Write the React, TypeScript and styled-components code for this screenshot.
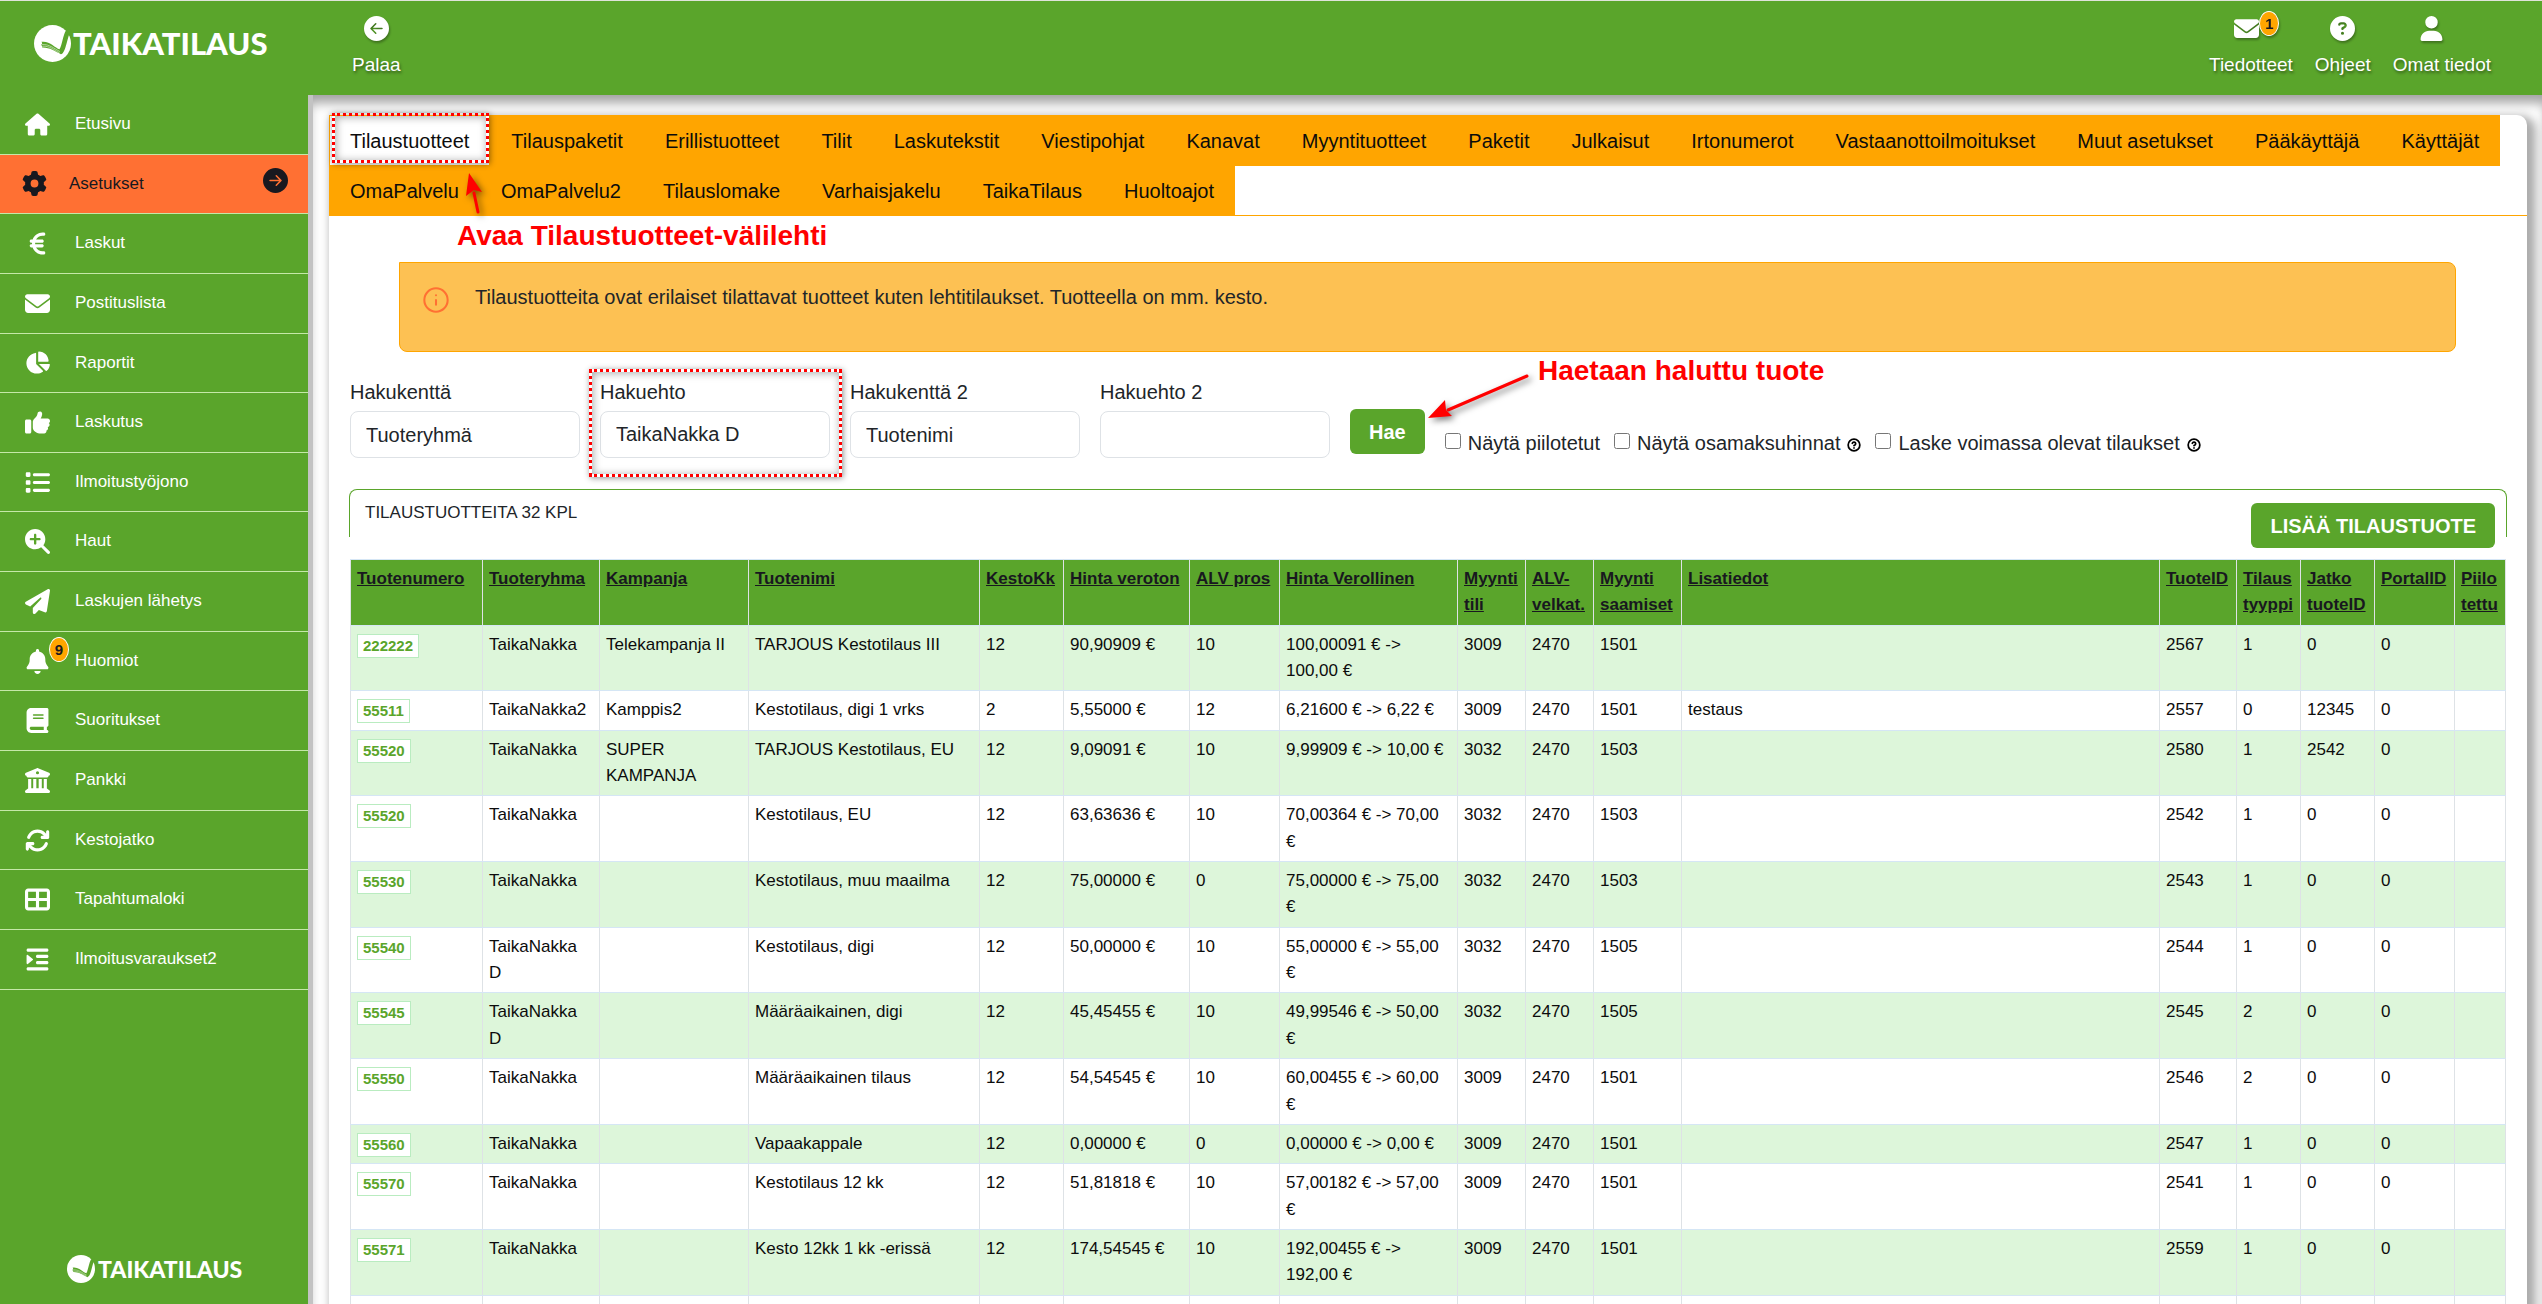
import React from 'react';
import styled, { createGlobalStyle } from 'styled-components';
import {
  FaHouse, FaGear, FaEuroSign, FaEnvelope, FaChartPie, FaThumbsUp, FaList,
  FaMagnifyingGlassPlus, FaPaperPlane, FaBell, FaBook, FaBuildingColumns,
  FaArrowsRotate, FaTableCellsLarge, FaIndent, FaUser, FaCircleQuestion,
} from 'react-icons/fa6';
import { BsArrowLeftCircleFill, BsArrowRightCircleFill } from 'react-icons/bs';
import { CircleQuestionMark, Info } from 'lucide-react';

const green = '#5aa52b';
const orange = '#ffa500';
const dark = '#18181f';
const ink = '#212529';

const GlobalStyle = createGlobalStyle`
  *, *::before, *::after { box-sizing: border-box; }
  body { margin: 0; background: #fff; overflow: hidden; }
  body, button, input, select {
    font-family: "Liberation Sans", Arial, Helvetica, sans-serif;
    font-size: 20px;
    line-height: 30px;
    color: ${ink};
  }
  a { color: inherit; text-decoration: none; }
  ul { list-style: none; margin: 0; padding: 0; }
`;

const Page = styled.div`
  display: flex;
  flex-direction: column;
  height: 100vh;
`;

/* Header */
const Header = styled.header`
  position: relative;
  z-index: 2;
  display: flex;
  flex: none;
  height: 95px;
  padding-right: 51px;
  background: ${green};
  border-top: 1px solid #dfe3da;
`;

const LogoSlot = styled.div`
  width: 308px;
  padding: 23px 0 0 34px;
`;

const TopBar = styled.div`
  position: relative;
  display: flex;
  flex: 1;
  gap: 22px;
  padding: 15px 0 0 44px;
`;

const TopLink = styled.a<{ $push?: boolean }>`
  display: flex;
  flex-direction: column;
  align-items: center;
  gap: 10px;
  margin-left: ${(p) => (p.$push ? 'auto' : '0')};
  color: #fff;
  font-size: 19px;
  line-height: 28px;
  text-shadow: 1px 2px 3px rgba(0, 0, 0, 0.45);
`;

const TopIcon = styled.span<{ $trail?: number }>`
  position: relative;
  display: flex;
  height: 25px;
  margin-right: ${(p) => p.$trail || 0}px;
  filter: drop-shadow(1px 2px 1px rgba(0, 0, 0, 0.3));
`;

const Badge = styled.span<{ $raised?: boolean }>`
  position: absolute;
  left: ${(p) => (p.$raised ? 27 : 25)}px;
  top: ${(p) => (p.$raised ? -12 : -5)}px;
  width: 20px;
  height: 25px;
  border: 1px solid #fff;
  border-radius: 50%;
  background: ${orange};
  color: ${dark};
  font-size: 15px;
  font-weight: 700;
  line-height: 23px;
  text-align: center;
  text-shadow: none;
`;

const Brand = styled.a<{ $small?: boolean }>`
  display: flex;
  align-items: center;
  gap: ${(p) => (p.$small ? 3 : 2)}px;
  color: #fff;
  font-family: Lato, "Liberation Sans", sans-serif;
  font-weight: 900;
  font-size: ${(p) => (p.$small ? 23 : 31)}px;
  line-height: ${(p) => (p.$small ? 28 : 38)}px;
`;

/* Sidebar */
const Body = styled.div`
  display: flex;
  flex: 1;
  min-height: 0;
`;

const Sidebar = styled.nav`
  display: flex;
  flex-direction: column;
  flex: none;
  width: 313px;
  border-right: 5px solid #c3c3c3;
  background: ${green};
`;

const SideLink = styled.a<{ $active?: boolean }>`
  display: flex;
  align-items: center;
  gap: 22px;
  padding: 17px 20px 17px 22px;
  border-bottom: 1px solid #c5e8a8;
  background: ${(p) => (p.$active ? '#ff7033' : 'transparent')};
  color: ${(p) => (p.$active ? dark : '#fff')};
  font-size: 17px;
  line-height: 1.45;
`;

const SideIcon = styled.span<{ $fit?: boolean }>`
  position: relative;
  display: flex;
  align-items: center;
  justify-content: center;
  width: ${(p) => (p.$fit ? 25 : 31)}px;
  height: 24px;
`;

const ActiveMark = styled.span`
  display: flex;
  margin: -6px 0 0 auto;
`;

const SideFoot = styled.div`
  margin-top: auto;
  padding: 0 0 21px 67px;
`;

/* Content */
const Main = styled.main`
  flex: 1;
  min-width: 0;
  padding: 20px 15px 0 16px;
  overflow: hidden;
  box-shadow: inset 0 12px 12px -4px #a2a2a2;
`;

const Panel = styled.section`
  min-height: 100%;
  border-radius: 0 10px 0 0;
  background: #fff;
  box-shadow: 5px 5px 10px 4px #acacac;
`;

const Tabs = styled.ul`
  display: flex;
  flex-wrap: wrap;
  border-bottom: 1px solid ${orange};
`;

const TabItem = styled.li`
  position: relative;
  margin-bottom: -1px;
`;

const Tab = styled.a<{ $active?: boolean }>`
  display: block;
  padding: 10px 20px 9px;
  border: 1px solid ${orange};
  background: ${(p) => (p.$active ? '#fff' : orange)};
  color: #0c0c0c;
`;

const Notice = styled.div`
  display: flex;
  gap: 25px;
  min-height: 90px;
  margin: 46px 71px 0 70px;
  padding: 19px 22px;
  border: 1px solid ${orange};
  border-radius: 0 8px 8px 8px;
  background: #fdc153;
`;

const NoticeIcon = styled.span`
  display: flex;
  padding-top: 4px;
  color: #ff7033;
`;

const SearchForm = styled.form`
  display: flex;
  align-items: flex-end;
  gap: 20px;
  margin: 25px 21px 0;
`;

const Field = styled.div`
  position: relative;
  display: flex;
  flex-direction: column;
  gap: 4px;
  width: 230px;
`;

const fieldBox = `
  width: 100%;
  height: 47px;
  padding: 0 15px;
  border: 1px solid #dee2e6;
  border-radius: 8px;
  background: #fff;
  appearance: none;
`;
const TextInput = styled.input`${fieldBox}`;
const SelectInput = styled.select`${fieldBox}`;

const Button = styled.button<{ $low?: boolean }>`
  position: relative;
  flex: none;
  height: 45px;
  padding: 0 19px;
  margin: ${(p) => (p.$low ? '13px 0 0 auto' : '0 0 4px')};
  border: 0;
  border-radius: 6px;
  background: ${green};
  color: #fff;
  font-weight: 700;
`;

const Checks = styled.div`
  display: flex;
  gap: 14px;
`;

const Check = styled.label`
  display: flex;
  align-items: center;
  gap: 7px;
  white-space: nowrap;

  input { width: 16px; height: 16px; margin: 0 0 4px; }
  svg { margin-top: 3px; color: #000; }
`;

const ListHead = styled.div`
  display: flex;
  align-items: flex-start;
  height: 48px;
  margin: 31px 20px 22px;
  padding: 0 11px 0 15px;
  border: 1px solid ${green};
  border-bottom: 0;
  border-radius: 8px 8px 0 0;
`;

const ListTitle = styled.h2`
  margin: 10px 0 0;
  font-size: 17px;
  font-weight: 400;
  line-height: 26px;
`;

const TableWrap = styled.div`
  padding: 0 21px;
`;

const Table = styled.table`
  width: 100%;
  table-layout: fixed;
  border-collapse: collapse;
  font-size: 17px;
  line-height: 1.55;
  color: #0c0c0c;

  th, td {
    padding: 6px;
    border: 1px solid #dee2e6;
    border-top-color: #d5e6f5;
    border-bottom-color: #d5e6f5;
    text-align: left;
    vertical-align: top;
  }
  th { background: ${green}; color: ${dark}; white-space: nowrap; }
  th a { text-decoration: underline; }
  tbody tr:nth-child(odd) { background: #ddf6da; }
`;

const Code = styled.a`
  display: block;
  width: fit-content;
  padding: 0 5px;
  margin-top: 2px;
  border: 1px solid #b9ecc0;
  background: #fff;
  color: ${green};
  font-size: 15px;
  font-weight: 700;
  line-height: 22px;
`;

/* Guidance marks laid over the view */
const Highlight = styled.span<{ $inset: string }>`
  position: absolute;
  z-index: 3;
  inset: ${(p) => p.$inset};
  border: 3px dotted #f00;
  box-shadow: 1px 1px 6px rgba(0, 0, 0, 0.45), inset 1px 1px 8px rgba(0, 0, 0, 0.35);
  pointer-events: none;
`;

const Callout = styled.strong<{ $left: number; $top: number }>`
  position: absolute;
  z-index: 3;
  left: ${(p) => p.$left}px;
  top: ${(p) => p.$top}px;
  color: #f00;
  font-size: 28px;
  line-height: 32px;
  white-space: nowrap;
`;

const Arrow = styled.svg<{ $left: number; $top: number }>`
  position: absolute;
  z-index: 3;
  left: ${(p) => p.$left}px;
  top: ${(p) => p.$top}px;
  overflow: visible;
  filter: drop-shadow(3px 3px 3px rgba(0, 0, 0, 0.5));
`;

const Emblem = ({ size }: { size: number }) => (
  <svg width={size} height={size} viewBox="0 0 110 110" aria-hidden="true">
    <circle cx="55" cy="55" r="55" fill="#fff" />
    <path d="M114 10 L94 18 C86 32 84 58 76 72 C62 68 46 46 22 50 C26 54 24 56 20 60 C24 60 26 62 24 67 C46 66 62 78 80 87 C94 84 97 44 107 22 Z" fill={green} />
    <path d="M24 58 C46 57 60 70 77 79 M26 63 C46 62 60 74 76 83" fill="none" stroke="#fff" strokeWidth="1.5" />
  </svg>
);

const menu = [
  { label: 'Etusivu', Icon: FaHouse },
  { label: 'Asetukset', Icon: FaGear, active: true },
  { label: 'Laskut', Icon: FaEuroSign },
  { label: 'Postituslista', Icon: FaEnvelope },
  { label: 'Raportit', Icon: FaChartPie },
  { label: 'Laskutus', Icon: FaThumbsUp },
  { label: 'Ilmoitustyöjono', Icon: FaList },
  { label: 'Haut', Icon: FaMagnifyingGlassPlus },
  { label: 'Laskujen lähetys', Icon: FaPaperPlane },
  { label: 'Huomiot', Icon: FaBell, badge: 9 },
  { label: 'Suoritukset', Icon: FaBook },
  { label: 'Pankki', Icon: FaBuildingColumns },
  { label: 'Kestojatko', Icon: FaArrowsRotate },
  { label: 'Tapahtumaloki', Icon: FaTableCellsLarge },
  { label: 'Ilmoitusvaraukset2', Icon: FaIndent },
];

const tabs = [
  'Tilaustuotteet', 'Tilauspaketit', 'Erillistuotteet', 'Tilit', 'Laskutekstit',
  'Viestipohjat', 'Kanavat', 'Myyntituotteet', 'Paketit', 'Julkaisut',
  'Irtonumerot', 'Vastaanottoilmoitukset', 'Muut asetukset', 'Pääkäyttäjä',
  'Käyttäjät', 'OmaPalvelu', 'OmaPalvelu2', 'Tilauslomake', 'Varhaisjakelu',
  'TaikaTilaus', 'Huoltoajot',
];

const columns: [string[], number?][] = [
  [['Tuotenumero'], 132],
  [['Tuoteryhma'], 117],
  [['Kampanja'], 149],
  [['Tuotenimi'], 231],
  [['KestoKk'], 84],
  [['Hinta veroton'], 126],
  [['ALV pros'], 90],
  [['Hinta Verollinen'], 178],
  [['Myynti', 'tili'], 68],
  [['ALV-', 'velkat.'], 68],
  [['Myynti', 'saamiset'], 88],
  [['Lisatiedot']],
  [['TuoteID'], 77],
  [['Tilaus', 'tyyppi'], 64],
  [['Jatko', 'tuoteID'], 74],
  [['PortalID'], 80],
  [['Piilo', 'tettu'], 51],
];

const rows: string[][] = [
  ['222222', 'TaikaNakka', 'Telekampanja II', 'TARJOUS Kestotilaus III', '12', '90,90909 €', '10', '100,00091 € -> 100,00 €', '3009', '2470', '1501', '', '2567', '1', '0', '0', ''],
  ['55511', 'TaikaNakka2', 'Kamppis2', 'Kestotilaus, digi 1 vrks', '2', '5,55000 €', '12', '6,21600 € -> 6,22 €', '3009', '2470', '1501', 'testaus', '2557', '0', '12345', '0', ''],
  ['55520', 'TaikaNakka', 'SUPER KAMPANJA', 'TARJOUS Kestotilaus, EU', '12', '9,09091 €', '10', '9,99909 € -> 10,00 €', '3032', '2470', '1503', '', '2580', '1', '2542', '0', ''],
  ['55520', 'TaikaNakka', '', 'Kestotilaus, EU', '12', '63,63636 €', '10', '70,00364 € -> 70,00 €', '3032', '2470', '1503', '', '2542', '1', '0', '0', ''],
  ['55530', 'TaikaNakka', '', 'Kestotilaus, muu maailma', '12', '75,00000 €', '0', '75,00000 € -> 75,00 €', '3032', '2470', '1503', '', '2543', '1', '0', '0', ''],
  ['55540', 'TaikaNakka D', '', 'Kestotilaus, digi', '12', '50,00000 €', '10', '55,00000 € -> 55,00 €', '3032', '2470', '1505', '', '2544', '1', '0', '0', ''],
  ['55545', 'TaikaNakka D', '', 'Määräaikainen, digi', '12', '45,45455 €', '10', '49,99546 € -> 50,00 €', '3032', '2470', '1505', '', '2545', '2', '0', '0', ''],
  ['55550', 'TaikaNakka', '', 'Määräaikainen tilaus', '12', '54,54545 €', '10', '60,00455 € -> 60,00 €', '3009', '2470', '1501', '', '2546', '2', '0', '0', ''],
  ['55560', 'TaikaNakka', '', 'Vapaakappale', '12', '0,00000 €', '0', '0,00000 € -> 0,00 €', '3009', '2470', '1501', '', '2547', '1', '0', '0', ''],
  ['55570', 'TaikaNakka', '', 'Kestotilaus 12 kk', '12', '51,81818 €', '10', '57,00182 € -> 57,00 €', '3009', '2470', '1501', '', '2541', '1', '0', '0', ''],
  ['55571', 'TaikaNakka', '', 'Kesto 12kk 1 kk -erissä', '12', '174,54545 €', '10', '192,00455 € -> 192,00 €', '3009', '2470', '1501', '', '2559', '1', '0', '0', ''],
];

export default function App() {
  return (
    <Page>
      <GlobalStyle />
      <Header>
        <LogoSlot>
          <Brand href="#"><Emblem size={37} />TAIKATILAUS</Brand>
        </LogoSlot>
        <TopBar>
          <TopLink href="#">
            <TopIcon><BsArrowLeftCircleFill size={25} /></TopIcon>
            Palaa
          </TopLink>
          <TopLink href="#" $push>
            <TopIcon $trail={8}><FaEnvelope size={25} /><Badge>1</Badge></TopIcon>
            Tiedotteet
          </TopLink>
          <TopLink href="#">
            <TopIcon><FaCircleQuestion size={25} /></TopIcon>
            Ohjeet
          </TopLink>
          <TopLink href="#">
            <TopIcon $trail={20}><FaUser size={25} /></TopIcon>
            Omat tiedot
          </TopLink>
        </TopBar>
      </Header>

      <Body>
        <Sidebar>
          <ul>
            {menu.map(({ label, Icon, active, badge }) => (
              <li key={label}>
                <SideLink href="#" $active={active}>
                  <SideIcon $fit={active}>
                    <Icon size={25} />
                    {badge && <Badge $raised>{badge}</Badge>}
                  </SideIcon>
                  {label}
                  {active && <ActiveMark><BsArrowRightCircleFill size={25} /></ActiveMark>}
                </SideLink>
              </li>
            ))}
          </ul>
          <SideFoot>
            <Brand href="#" $small><Emblem size={28} />TAIKATILAUS</Brand>
          </SideFoot>
        </Sidebar>

        <Main>
          <Panel>
            <Tabs>
              {tabs.map((name, i) => (
                <TabItem key={name}>
                  <Tab href="#" $active={i === 0}>{name}</Tab>
                  {i === 0 && (
                    <>
                      <Highlight $inset="-2px 1px 3px 3px" />
                      <Arrow $left={137} $top={58} width="20" height="40" viewBox="0 0 20 40">
                        <path d="M12 39 L8 20" stroke="#f00" strokeWidth="3" strokeLinecap="round" />
                        <path d="M3 0 L16 19 L8 17 L0 23 Z" fill="#f00" />
                      </Arrow>
                      <Callout $left={128} $top={105}>Avaa Tilaustuotteet-välilehti</Callout>
                    </>
                  )}
                </TabItem>
              ))}
            </Tabs>

            <Notice role="note">
              <NoticeIcon><Info size={28} strokeWidth={1.75} /></NoticeIcon>
              Tilaustuotteita ovat erilaiset tilattavat tuotteet kuten lehtitilaukset. Tuotteella on mm. kesto.
            </Notice>

            <SearchForm>
              <Field>
                <label htmlFor="field1">Hakukenttä</label>
                <SelectInput id="field1"><option>Tuoteryhmä</option></SelectInput>
              </Field>
              <Field>
                <label htmlFor="term1">Hakuehto</label>
                <TextInput id="term1" defaultValue="TaikaNakka D" />
                <Highlight $inset="-8px -12px -19px -11px" />
              </Field>
              <Field>
                <label htmlFor="field2">Hakukenttä 2</label>
                <SelectInput id="field2"><option>Tuotenimi</option></SelectInput>
              </Field>
              <Field>
                <label htmlFor="term2">Hakuehto 2</label>
                <TextInput id="term2" />
                <Arrow $left={328} $top={-2} width="100" height="46" viewBox="0 0 100 46">
                  <path d="M99 1 L20 35" stroke="#f00" strokeWidth="3" strokeLinecap="round" />
                  <path d="M0 43 L17 25 L18 35 L24 41 Z" fill="#f00" />
                </Arrow>
                <Callout $left={438} $top={-22}>Haetaan haluttu tuote</Callout>
              </Field>
              <Button type="button">Hae</Button>
              <Checks>
                <Check><input type="checkbox" />Näytä piilotetut</Check>
                <Check><input type="checkbox" />Näytä osamaksuhinnat <CircleQuestionMark size={14} strokeWidth={3} /></Check>
                <Check><input type="checkbox" />Laske voimassa olevat tilaukset <CircleQuestionMark size={14} strokeWidth={3} /></Check>
              </Checks>
            </SearchForm>

            <ListHead>
              <ListTitle>TILAUSTUOTTEITA 32 KPL</ListTitle>
              <Button type="button" $low>LISÄÄ TILAUSTUOTE</Button>
            </ListHead>

            <TableWrap>
              <Table>
                <colgroup>
                  {columns.map(([, width], i) => <col key={i} width={width} />)}
                </colgroup>
                <thead>
                  <tr>
                    {columns.map(([lines], i) => (
                      <th key={i} scope="col">
                        <a href="#">
                          {lines[0]}
                          {lines[1] && <><br />{lines[1]}</>}
                        </a>
                      </th>
                    ))}
                  </tr>
                </thead>
                <tbody>
                  {rows.map((row) => (
                    <tr key={row[12]}>
                      {row.map((cell, i) => (
                        <td key={i}>{i === 0 ? <Code href="#">{cell}</Code> : cell}</td>
                      ))}
                    </tr>
                  ))}
                  <tr>{columns.map((_, i) => <td key={i}>&nbsp;</td>)}</tr>
                </tbody>
              </Table>
            </TableWrap>
          </Panel>
        </Main>
      </Body>
    </Page>
  );
}
